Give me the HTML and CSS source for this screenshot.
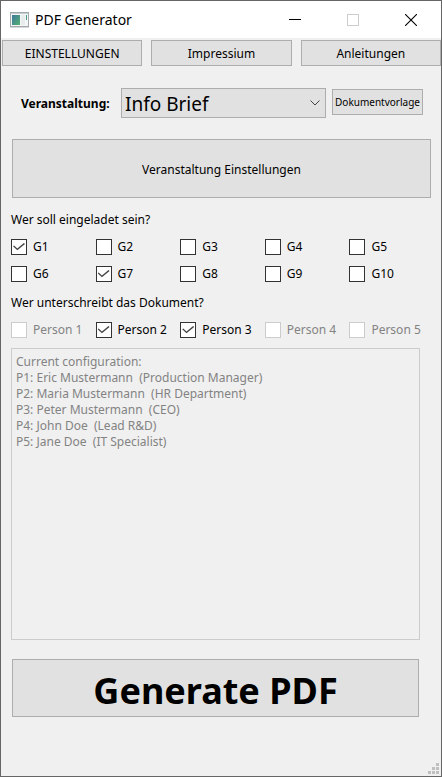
FILE: index.html
```html
<!DOCTYPE html>
<html lang="de">
<head>
<meta charset="utf-8">
<meta name="viewport" content="width=device-width, initial-scale=1">
<title>PDF Generator</title>
<link rel="stylesheet" href="styles.css">
</head>
<body>
<div class="window">
  <header class="titlebar">
    <svg class="app-icon" width="19" height="16" viewBox="0 0 19 16" aria-hidden="true">
      <defs>
        <linearGradient id="pane" x1="0" y1="0" x2="1" y2="1">
          <stop offset="0" stop-color="#3f78a0"/>
          <stop offset="1" stop-color="#55b070"/>
        </linearGradient>
      </defs>
      <rect x="0.5" y="0.5" width="18" height="14" fill="#f4f6f6" stroke="#a3a9ad"/>
      <rect x="1" y="1" width="17" height="1" fill="#c5cbd0"/>
      <rect x="2" y="3" width="8" height="10" fill="url(#pane)"/>
      <rect x="11" y="3" width="4" height="10" fill="#e8ecec"/>
      <rect x="16" y="3" width="1" height="5" fill="#4c9c84"/>
      <rect x="0" y="15" width="19" height="1" fill="#d5d8da"/>
    </svg>
    <h1 class="title">PDF Generator</h1>
    <div class="window-controls">
      <button type="button" class="control" aria-label="Minimieren">
        <svg width="12" height="12" viewBox="0 0 12 12"><path d="M0 5.5h12" stroke="#000"/></svg>
      </button>
      <button type="button" class="control" aria-label="Maximieren" disabled>
        <svg width="12" height="12" viewBox="0 0 12 12"><rect x="0.5" y="0.5" width="11" height="11" fill="none" stroke="#ccc"/></svg>
      </button>
      <button type="button" class="control" aria-label="Beenden">
        <svg width="12" height="12" viewBox="0 0 12 12"><path d="M0 0l12 12M12 0L0 12" stroke="#000" stroke-width="1.1"/></svg>
      </button>
    </div>
  </header>

  <nav class="tabs">
    <button type="button" class="button">EINSTELLUNGEN</button>
    <button type="button" class="button">Impressium</button>
    <button type="button" class="button">Anleitungen</button>
  </nav>

  <main class="content">
    <div class="event-row">
      <label class="event-label" for="event">Veranstaltung:</label>
      <div class="select-wrap">
        <select class="select" id="event"><option>Info Brief</option></select>
        <svg class="chevron" width="10" height="6" viewBox="0 0 10 6" aria-hidden="true"><path d="M0.5 0.5L5 5L9.5 0.5" fill="none" stroke="#444"/></svg>
      </div>
      <button type="button" class="button template">Dokumentvorlage</button>
    </div>

    <button type="button" class="button event-settings">Veranstaltung Einstellungen</button>

    <fieldset class="group">
      <legend class="legend">Wer soll eingeladet sein?</legend>
      <div class="checks">
        <label class="check"><input type="checkbox" checked>G1</label>
        <label class="check"><input type="checkbox">G2</label>
        <label class="check"><input type="checkbox">G3</label>
        <label class="check"><input type="checkbox">G4</label>
        <label class="check"><input type="checkbox">G5</label>
        <label class="check"><input type="checkbox">G6</label>
        <label class="check"><input type="checkbox" checked>G7</label>
        <label class="check"><input type="checkbox">G8</label>
        <label class="check"><input type="checkbox">G9</label>
        <label class="check"><input type="checkbox">G10</label>
      </div>
    </fieldset>

    <fieldset class="group">
      <legend class="legend">Wer unterschreibt das Dokument?</legend>
      <div class="checks">
        <label class="check off"><input type="checkbox" disabled>Person 1</label>
        <label class="check"><input type="checkbox" checked>Person 2</label>
        <label class="check"><input type="checkbox" checked>Person 3</label>
        <label class="check off"><input type="checkbox" disabled>Person 4</label>
        <label class="check off"><input type="checkbox" disabled>Person 5</label>
      </div>
    </fieldset>

    <textarea class="config" aria-label="Current configuration" disabled>Current configuration:
P1: Eric Mustermann  (Production Manager)
P2: Maria Mustermann  (HR Department)
P3: Peter Mustermann  (CEO)
P4: John Doe  (Lead R&amp;D)
P5: Jane Doe  (IT Specialist)</textarea>

    <button type="button" class="button generate">Generate PDF</button>
  </main>

  <svg class="grip" width="11" height="11" viewBox="0 0 11 11" aria-hidden="true">
    <path d="M8 0h3v3h-3zM4 4h3v3h-3zM8 4h3v3h-3zM0 8h3v3h-3zM4 8h3v3h-3zM8 8h3v3h-3z" fill="#bfbfbf"/>
  </svg>
</div>
</body>
</html>
```
FILE: styles.css
```css
* {
  box-sizing: border-box;
}

body {
  margin: 0;
  font: 12px/16px "Noto Sans", "Open Sans", sans-serif;
  color: #000;
}

button,
select,
textarea {
  font: inherit;
  color: inherit;
  margin: 0;
}

.window {
  position: relative;
  display: flex;
  flex-direction: column;
  min-height: 100vh;
  border: 1px solid #666;
  background: #f0f0f0;
}

.titlebar {
  display: flex;
  align-items: center;
  height: 37px;
  padding: 0 1px 0 9px;
  background: #fff;
}

.title {
  flex: 1;
  margin: 0 0 0 6px;
  font-size: 14px;
  font-weight: 400;
  line-height: 20px;
}

.window-controls {
  display: flex;
}

.control {
  display: grid;
  place-items: center;
  width: 58px;
  height: 34px;
  padding: 0;
  border: 0;
  background: none;
}

.button {
  padding: 2px 0 0;
  border: 1px solid #adadad;
  background: #e1e1e1;
}

.tabs {
  display: grid;
  grid-template-columns: repeat(3, 1fr);
  gap: 9px;
  padding: 2px 0 0 1px;
}

.tabs .button {
  height: 26px;
}

.content {
  display: flex;
  flex: 1;
  flex-direction: column;
  padding: 22px 10px 59px;
}

.event-row {
  display: flex;
  align-items: center;
  padding: 0 8px 0 10px;
}

.event-label {
  width: 100px;
  padding-top: 2px;
  font-weight: 700;
}

.select-wrap {
  position: relative;
  flex: 1;
}

.select {
  appearance: none;
  display: block;
  width: 100%;
  height: 30px;
  padding: 2px 24px 0 3px;
  border: 1px solid #adadad;
  border-radius: 0;
  background: #e1e1e1;
  font-size: 19px;
  line-height: 26px;
}

.chevron {
  position: absolute;
  top: 12px;
  right: 6px;
  pointer-events: none;
}

.template {
  width: 91px;
  height: 26px;
  margin: 0 0 2px 6px;
  padding: 0;
  font-size: 10px;
}

.event-settings {
  height: 59px;
  margin: 21px 0 14px 1px;
}

.group {
  min-width: 0;
  margin: 0 -3px 13px 0;
  padding: 0;
  border: 0;
}

.group + .group {
  margin-bottom: 10px;
}

.legend {
  padding: 0;
}

.checks {
  display: grid;
  grid-template-columns: repeat(5, 1fr);
  row-gap: 11px;
  padding-top: 11px;
}

.check {
  display: flex;
  align-items: center;
  gap: 6px;
  white-space: nowrap;
}

.check.off {
  color: #838383;
}

.check input {
  appearance: none;
  display: grid;
  place-items: center;
  width: 16px;
  height: 16px;
  margin: 0;
  border: 1px solid #333;
  background: #fff;
}

.check input:disabled {
  border-color: #ccc;
}

.check input:checked::before {
  content: "";
  width: 12px;
  height: 8px;
  background: #444;
  clip-path: polygon(0 42%, 9% 30%, 36% 68%, 91% 0, 100% 13%, 36% 92%);
}

.config {
  flex: 1;
  min-height: 120px;
  margin-right: 11px;
  padding: 5px 4px;
  border: 1px solid #ccc;
  background: #f0f0f0;
  color: #838383;
  resize: none;
}

.generate {
  height: 58px;
  margin: 19px 12px 0 1px;
  padding-top: 6px;
  font-size: 36px;
  font-weight: 700;
  line-height: 48px;
}

.grip {
  position: absolute;
  right: 2px;
  bottom: 2px;
}
```
